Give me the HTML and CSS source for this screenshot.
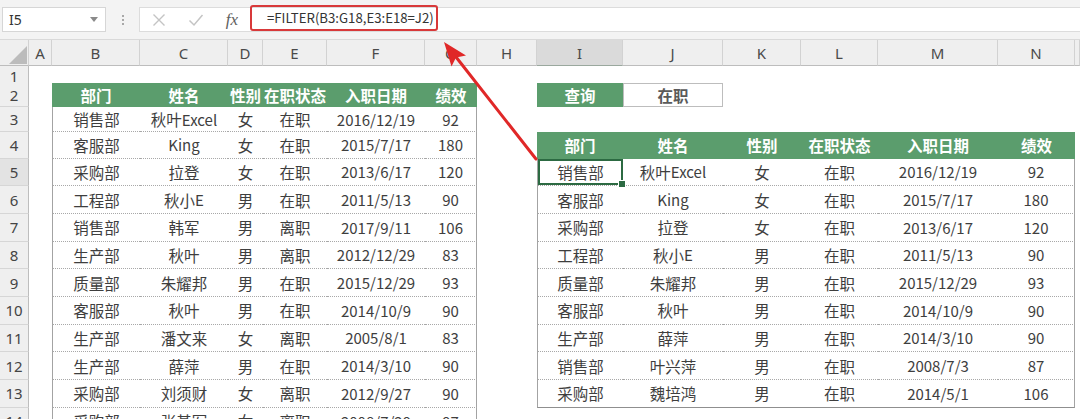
FILE: index.html
```html
<!DOCTYPE html>
<html lang="zh">
<head>
<meta charset="utf-8">
<title>FILTER</title>
<link rel="stylesheet" href="styles.css">
</head>
<body>
<div class="topbar">
  <div class="namebox"><span>I5</span><svg class="caret" width="8" height="5" viewBox="0 0 8 5"><path d="M0 0H8L4 5Z" fill="#8a8a8a"/></svg></div>
  <div class="dots"><span></span><span></span><span></span></div>
  <div class="fbox">
    <div class="ico"><svg width="14" height="14" viewBox="0 0 14 14"><path d="M1.5 1.5L12.5 12.5M12.5 1.5L1.5 12.5" stroke="#c4c4c4" stroke-width="1.4" fill="none"/></svg></div>
    <div class="ico"><svg width="16" height="14" viewBox="0 0 16 14"><path d="M1.5 7.5L6 12L14.5 2" stroke="#c4c4c4" stroke-width="1.5" fill="none"/></svg></div>
    <div class="ico fx">fx</div>
    <div class="formula">=FILTER(B3:G18,E3:E18=J2)</div>
  </div>
</div>

<div class="sheet">
  <div class="r hdr">
    <div class="corner"><svg width="18" height="18" viewBox="0 0 18 18"><path d="M18 0V18H0Z" fill="#bcbcbc"/></svg></div>
    <div class="ch">A</div><div class="ch">B</div><div class="ch">C</div><div class="ch">D</div><div class="ch">E</div><div class="ch">F</div><div class="ch">G</div><div class="ch">H</div><div class="ch cs">I</div><div class="ch">J</div><div class="ch">K</div><div class="ch">L</div><div class="ch">M</div><div class="ch">N</div><div class="ch"></div>
  </div>

  <div class="r r1">
    <div class="n">1</div><div></div><div></div><div></div><div></div><div></div><div></div><div></div><div></div><div></div><div></div><div></div><div></div><div></div><div></div><div></div>
  </div>

  <div class="r r2">
    <div class="n">2</div><div></div>
    <div class="gh">部门</div><div class="gh">姓名</div><div class="gh">性别</div><div class="gh">在职状态</div><div class="gh">入职日期</div><div class="gh">绩效</div>
    <div></div>
    <div class="gh">查询</div><div class="q">在职</div>
    <div></div><div></div><div></div><div></div><div></div>
  </div>

  <div class="r r3">
    <div class="n">3</div><div></div>
    <div class="x bl">销售部</div><div class="x">秋叶<span class="lt">Excel</span></div><div class="x">女</div><div class="x">在职</div><div class="x lt">2016/12/19</div><div class="x br lt">92</div>
    <div></div><div></div><div></div><div></div><div></div><div></div><div></div><div></div>
  </div>

  <div class="r r4">
    <div class="n">4</div><div></div>
    <div class="x bl">客服部</div><div class="x lt">King</div><div class="x">女</div><div class="x">在职</div><div class="x lt">2015/7/17</div><div class="x br lt">180</div>
    <div></div>
    <div class="gh">部门</div><div class="gh">姓名</div><div class="gh">性别</div><div class="gh">在职状态</div><div class="gh">入职日期</div><div class="gh">绩效</div>
    <div></div>
  </div>

  <div class="r rd">
    <div class="n ns">5</div><div></div>
    <div class="x bl">采购部</div><div class="x">拉登</div><div class="x">女</div><div class="x">在职</div><div class="x lt">2013/6/17</div><div class="x br lt">120</div>
    <div></div>
    <div class="y bl sel">销售部</div><div class="y">秋叶<span class="lt">Excel</span></div><div class="y">女</div><div class="y">在职</div><div class="y lt">2016/12/19</div><div class="y br lt">92</div>
    <div></div>
  </div>

  <div class="r rd">
    <div class="n">6</div><div></div>
    <div class="x bl">工程部</div><div class="x">秋小<span class="lt">E</span></div><div class="x">男</div><div class="x">在职</div><div class="x lt">2011/5/13</div><div class="x br lt">90</div>
    <div></div>
    <div class="y bl">客服部</div><div class="y lt">King</div><div class="y">女</div><div class="y">在职</div><div class="y lt">2015/7/17</div><div class="y br lt">180</div>
    <div></div>
  </div>

  <div class="r rd">
    <div class="n">7</div><div></div>
    <div class="x bl">销售部</div><div class="x">韩军</div><div class="x">男</div><div class="x">离职</div><div class="x lt">2017/9/11</div><div class="x br lt">106</div>
    <div></div>
    <div class="y bl">采购部</div><div class="y">拉登</div><div class="y">女</div><div class="y">在职</div><div class="y lt">2013/6/17</div><div class="y br lt">120</div>
    <div></div>
  </div>

  <div class="r rd">
    <div class="n">8</div><div></div>
    <div class="x bl">生产部</div><div class="x">秋叶</div><div class="x">男</div><div class="x">离职</div><div class="x lt">2012/12/29</div><div class="x br lt">83</div>
    <div></div>
    <div class="y bl">工程部</div><div class="y">秋小<span class="lt">E</span></div><div class="y">男</div><div class="y">在职</div><div class="y lt">2011/5/13</div><div class="y br lt">90</div>
    <div></div>
  </div>

  <div class="r rd">
    <div class="n">9</div><div></div>
    <div class="x bl">质量部</div><div class="x">朱耀邦</div><div class="x">男</div><div class="x">在职</div><div class="x lt">2015/12/29</div><div class="x br lt">93</div>
    <div></div>
    <div class="y bl">质量部</div><div class="y">朱耀邦</div><div class="y">男</div><div class="y">在职</div><div class="y lt">2015/12/29</div><div class="y br lt">93</div>
    <div></div>
  </div>

  <div class="r rd">
    <div class="n">10</div><div></div>
    <div class="x bl">客服部</div><div class="x">秋叶</div><div class="x">男</div><div class="x">在职</div><div class="x lt">2014/10/9</div><div class="x br lt">90</div>
    <div></div>
    <div class="y bl">客服部</div><div class="y">秋叶</div><div class="y">男</div><div class="y">在职</div><div class="y lt">2014/10/9</div><div class="y br lt">90</div>
    <div></div>
  </div>

  <div class="r rd">
    <div class="n">11</div><div></div>
    <div class="x bl">生产部</div><div class="x">潘文来</div><div class="x">女</div><div class="x">离职</div><div class="x lt">2005/8/1</div><div class="x br lt">83</div>
    <div></div>
    <div class="y bl">生产部</div><div class="y">薛萍</div><div class="y">男</div><div class="y">在职</div><div class="y lt">2014/3/10</div><div class="y br lt">90</div>
    <div></div>
  </div>

  <div class="r rd">
    <div class="n">12</div><div></div>
    <div class="x bl">生产部</div><div class="x">薛萍</div><div class="x">男</div><div class="x">在职</div><div class="x lt">2014/3/10</div><div class="x br lt">90</div>
    <div></div>
    <div class="y bl">销售部</div><div class="y">叶兴萍</div><div class="y">男</div><div class="y">在职</div><div class="y lt">2008/7/3</div><div class="y br lt">87</div>
    <div></div>
  </div>

  <div class="r rd">
    <div class="n">13</div><div></div>
    <div class="x bl">采购部</div><div class="x">刘须财</div><div class="x">女</div><div class="x">离职</div><div class="x lt">2012/9/27</div><div class="x br lt">90</div>
    <div></div>
    <div class="y bl last">采购部</div><div class="y last">魏培鸿</div><div class="y last">男</div><div class="y last">在职</div><div class="y last lt">2014/5/1</div><div class="y br last lt">106</div>
    <div></div>
  </div>

  <div class="r rd">
    <div class="n">14</div><div></div>
    <div class="x bl">采购部</div><div class="x">张基军</div><div class="x">女</div><div class="x">离职</div><div class="x lt">2008/7/29</div><div class="x br lt">97</div>
    <div></div><div></div><div></div><div></div><div></div><div></div><div></div><div></div>
  </div>
</div>

<svg class="arrow" width="1080" height="419" viewBox="0 0 1080 419">
  <line x1="536" y1="159" x2="456" y2="57" stroke="#e02828" stroke-width="3" stroke-linecap="round"/>
  <polygon points="444,42 466,55.5 456,57.5 451.5,66.5" fill="#e02828"/>
</svg>
</body>
</html>
```

FILE: styles.css
```css
* { box-sizing: border-box; margin: 0; padding: 0; }

html, body {
  width: 1080px;
  height: 419px;
  overflow: hidden;
  background: #ffffff;
}

body {
  position: relative;
  font-family: "Noto Sans CJK SC", "Noto Sans", sans-serif;
  color: #3e3e3e;
}

/* ---------- formula bar ---------- */
.topbar {
  height: 40px;
  background: #f3f3f3;
  border-bottom: 1px solid #d9d9d9;
  display: flex;
  align-items: flex-start;
  padding-top: 7px;
}

.namebox {
  margin-left: 2px;
  width: 104px;
  height: 25px;
  background: #fff;
  border: 1px solid #d6d6d6;
  display: flex;
  align-items: center;
  justify-content: space-between;
  padding: 0 6px 0 6px;
  font-family: "Noto Sans", sans-serif;
  font-size: 14px;
  color: #333;
}

.caret { margin-right: 1px; }

.dots {
  width: 33px;
  height: 25px;
  display: flex;
  flex-direction: column;
  align-items: center;
  justify-content: center;
  gap: 2px;
}

.dots span {
  width: 2px;
  height: 2px;
  background: #a8a8a8;
}

.fbox {
  flex: 1;
  height: 25px;
  background: #fff;
  border: 1px solid #dcdcdc;
  border-right: none;
  display: flex;
  align-items: center;
}

.ico {
  width: 37px;
  height: 23px;
  display: flex;
  align-items: center;
  justify-content: center;
}

.fx {
  font-family: "Liberation Serif", serif;
  font-style: italic;
  font-size: 17px;
  color: #606060;
  width: 36px;
}

.formula {
  align-self: flex-start;
  margin-top: -3px;
  width: 188px;
  height: 26px;
  border: 2px solid #d8393a;
  border-radius: 3px;
  padding-left: 15px;
  font-size: 13.2px;
  line-height: 22px;
  color: #333;
  white-space: nowrap;
}

/* ---------- sheet grid ---------- */
.sheet {
  --cols: 29px 23px 88px 88px 35px 64px 98px 52px 60px 86px 100px 78px 77px 120px 77px 5px;
}

.r {
  display: grid;
  grid-template-columns: var(--cols);
}

.r > div {
  display: flex;
  align-items: center;
  justify-content: center;
  white-space: nowrap;
  font-size: 15.5px;
}

.r > div.lt, .lt { font-size: 15px; }

.hdr { height: 26px; }
.r1 { height: 17px; }
.r2 { height: 24px; }
.r3 { height: 25px; }
.r4 { height: 26.5px; }
.rd { height: 27.7px; }

.corner {
  background: #efefef;
  border-right: 1px solid #d2d2d2;
  border-bottom: 1px solid #bdbdbd;
  align-items: flex-end !important;
  justify-content: flex-end !important;
  padding: 0 1px 1px 0;
}

.ch {
  background: #efefef;
  border-right: 1px solid #d2d2d2;
  border-bottom: 1px solid #bdbdbd;
  font-family: "Noto Sans", sans-serif;
  font-size: 15px !important;
  color: #4a4a4a;
}

.cs {
  background: #dadada;
  border-bottom: 1px solid #9aa89e;
}

.n {
  background: #efefef;
  border-right: 1px solid #bdbdbd;
  border-bottom: 1px solid #d6d6d6;
  font-family: "Noto Sans", sans-serif;
  font-size: 15px !important;
  color: #444;
}

.ns { background: #e3e3e3; }

/* green header cells */
.gh {
  background: #5b9d6d;
  color: #ffffff;
  font-weight: 700;
}

/* query value cell */
.q {
  border: 1px solid #bdbdbd;
  color: #5a5a5a;
  font-weight: 700;
}

/* data cells */
.x, .y {
  border-bottom: 1px dotted #a8a8a8;
  color: #3e3e3e;
}

.bl { border-left: 1px solid #a3a3a3; }
.br { border-right: 1px solid #a3a3a3; }
.y.last { border-bottom: 1px solid #8f8f8f; }

.sel {
  position: relative;
  box-shadow: inset 0 0 0 2px #2c6a42;
}

.sel::after {
  content: "";
  position: absolute;
  right: -3px;
  bottom: -3px;
  width: 6px;
  height: 6px;
  background: #2c6a42;
  border: 1px solid #fff;
}

/* annotation arrow */
.arrow {
  position: absolute;
  left: 0;
  top: 0;
  pointer-events: none;
}
```
